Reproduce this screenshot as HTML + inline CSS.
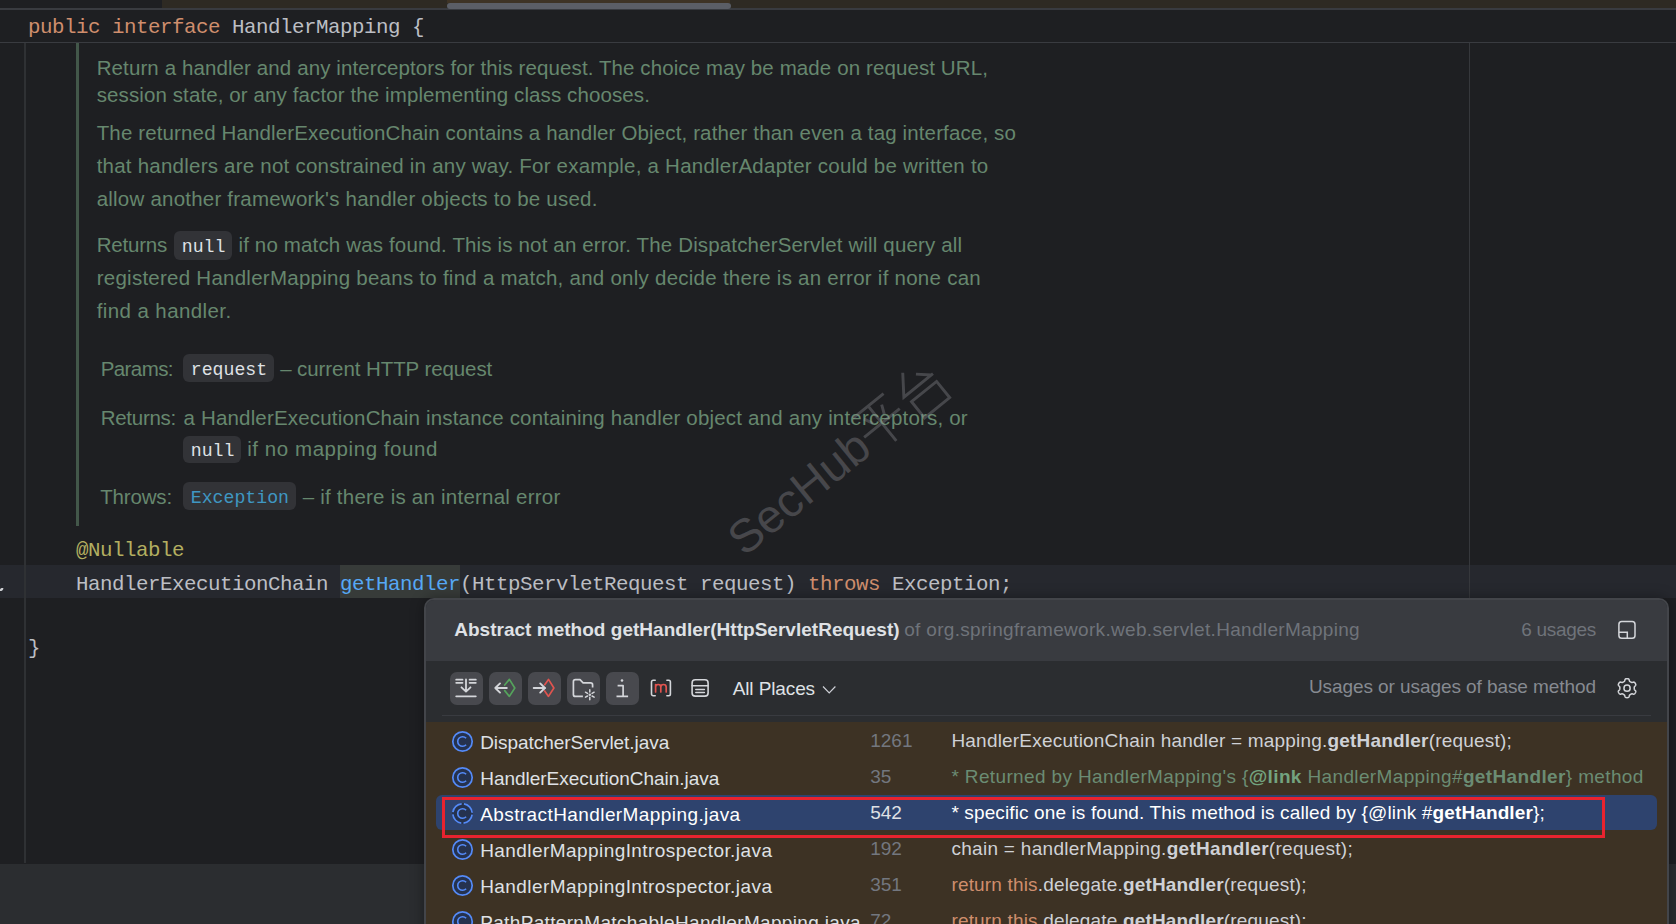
<!DOCTYPE html><html><head><meta charset="utf-8"><style>
html,body{margin:0;padding:0;}
body{width:1676px;height:924px;overflow:hidden;position:relative;background:#1e1f22;font-family:'Liberation Sans', sans-serif;}
.a{position:absolute;}
.t{position:absolute;white-space:pre;line-height:0;}
.t b{font-weight:bold;}
</style></head><body>

<!-- top strip -->
<div class="a" style="left:162px;top:0;width:1514px;height:8px;background:#2e2a23"></div>
<div class="a" style="left:447px;top:0;width:283px;height:3px;background:#3e3325"></div>
<div class="a" style="left:0;top:8px;width:1676px;height:2px;background:#393b40"></div>
<div class="a" style="left:447px;top:3px;width:283.5px;height:6px;background:#5b5e66;border-radius:3px"></div>
<div class="a" style="left:0;top:42px;width:1676px;height:1px;background:#393b40"></div>
<!-- current line -->
<div class="a" style="left:0;top:565px;width:1676px;height:33px;background:#26282e"></div>
<div class="a" style="left:340px;top:565px;width:120px;height:33px;background:#373b39"></div>
<!-- gutter lines -->
<div class="a" style="left:24px;top:43px;width:2px;height:820px;background:#2f3134"></div>
<div class="a" style="left:1468.5px;top:43px;width:1.6px;height:555px;background:#36383c"></div>
<!-- doc border -->
<div class="a" style="left:76px;top:43px;width:3px;height:483px;background:#43574a"></div>
<!-- bottom bar -->
<div class="a" style="left:0;top:864px;width:1676px;height:60px;background:#2b2d30"></div>

<div class="a" style="left:174px;top:231px;width:58px;height:28.5px;background:#323337;border-radius:6px;"></div>
<div class="a" style="left:182.5px;top:354px;width:91.25px;height:28px;background:#323337;border-radius:6px;"></div>
<div class="a" style="left:182.5px;top:435.5px;width:58.0px;height:27.5px;background:#323337;border-radius:6px;"></div>
<div class="a" style="left:182.5px;top:482px;width:113.75px;height:27.5px;background:#323337;border-radius:6px;"></div>

<div class="t" id="t0" style="left:28.00px;top:28.16px;font:normal 20.8px 'Liberation Mono', monospace;line-height:0;color:#bcbec4;letter-spacing:-0.48px;"><span style="color:#cf8e6d">public interface</span> HandlerMapping {</div>
<div class="t" id="t1" style="left:76.00px;top:551.16px;font:normal 20.8px 'Liberation Mono', monospace;line-height:0;color:#b3ae60;letter-spacing:-0.48px;">@Nullable</div>
<div class="t" id="t2" style="left:76.00px;top:585.16px;font:normal 20.8px 'Liberation Mono', monospace;line-height:0;color:#bcbec4;letter-spacing:-0.48px;">HandlerExecutionChain <span style="color:#56a8f5">getHandler</span>(HttpServletRequest request) <span style="color:#cf8e6d">throws</span> Exception;</div>
<div class="t" id="t3" style="left:28.00px;top:649.16px;font:normal 20.8px 'Liberation Mono', monospace;line-height:0;color:#bcbec4;letter-spacing:-0.48px;">}</div>
<div class="t" id="t4" style="left:96.70px;top:67.90px;font:normal 20.5px 'Liberation Sans', sans-serif;line-height:0;color:#66876e;letter-spacing:0.103px;">Return a handler and any interceptors for this request. The choice may be made on request URL,</div>
<div class="t" id="t5" style="left:96.70px;top:94.90px;font:normal 20.5px 'Liberation Sans', sans-serif;line-height:0;color:#66876e;letter-spacing:0.106px;">session state, or any factor the implementing class chooses.</div>
<div class="t" id="t6" style="left:96.70px;top:132.90px;font:normal 20.5px 'Liberation Sans', sans-serif;line-height:0;color:#66876e;letter-spacing:0.136px;">The returned HandlerExecutionChain contains a handler Object, rather than even a tag interface, so</div>
<div class="t" id="t7" style="left:96.70px;top:165.90px;font:normal 20.5px 'Liberation Sans', sans-serif;line-height:0;color:#66876e;letter-spacing:0.227px;">that handlers are not constrained in any way. For example, a HandlerAdapter could be written to</div>
<div class="t" id="t8" style="left:96.70px;top:198.90px;font:normal 20.5px 'Liberation Sans', sans-serif;line-height:0;color:#66876e;letter-spacing:0.218px;">allow another framework&#x27;s handler objects to be used.</div>
<div class="t" id="t9" style="left:96.70px;top:244.90px;font:normal 20.5px 'Liberation Sans', sans-serif;line-height:0;color:#66876e;letter-spacing:-0.212px;">Returns</div>
<div class="t" id="t10" style="left:238.45px;top:244.90px;font:normal 20.5px 'Liberation Sans', sans-serif;line-height:0;color:#66876e;letter-spacing:0.153px;">if no match was found. This is not an error. The DispatcherServlet will query all</div>
<div class="t" id="t11" style="left:96.70px;top:277.90px;font:normal 20.5px 'Liberation Sans', sans-serif;line-height:0;color:#66876e;letter-spacing:0.254px;">registered HandlerMapping beans to find a match, and only decide there is an error if none can</div>
<div class="t" id="t12" style="left:96.70px;top:310.90px;font:normal 20.5px 'Liberation Sans', sans-serif;line-height:0;color:#66876e;letter-spacing:0.400px;">find a handler.</div>
<div class="t" id="t13" style="left:100.70px;top:368.90px;font:normal 20.5px 'Liberation Sans', sans-serif;line-height:0;color:#66876e;letter-spacing:-0.575px;">Params:</div>
<div class="t" id="t14" style="left:280.20px;top:368.90px;font:normal 20.5px 'Liberation Sans', sans-serif;line-height:0;color:#66876e;letter-spacing:-0.081px;">– current HTTP request</div>
<div class="t" id="t15" style="left:100.70px;top:417.90px;font:normal 20.5px 'Liberation Sans', sans-serif;line-height:0;color:#66876e;letter-spacing:-0.273px;">Returns:</div>
<div class="t" id="t16" style="left:183.45px;top:417.90px;font:normal 20.5px 'Liberation Sans', sans-serif;line-height:0;color:#66876e;letter-spacing:0.182px;">a HandlerExecutionChain instance containing handler object and any interceptors, or</div>
<div class="t" id="t17" style="left:247.20px;top:448.90px;font:normal 20.5px 'Liberation Sans', sans-serif;line-height:0;color:#66876e;letter-spacing:0.564px;">if no mapping found</div>
<div class="t" id="t18" style="left:100.20px;top:497.40px;font:normal 20.5px 'Liberation Sans', sans-serif;line-height:0;color:#66876e;letter-spacing:-0.158px;">Throws:</div>
<div class="t" id="t19" style="left:302.70px;top:497.40px;font:normal 20.5px 'Liberation Sans', sans-serif;line-height:0;color:#66876e;letter-spacing:0.229px;">– if there is an internal error</div>
<div class="t" id="t20" style="left:181.75px;top:247.15px;font:normal 18.2px 'Liberation Mono', monospace;line-height:0;color:#dfe1e5;">null</div>
<div class="t" id="t21" style="left:190.75px;top:370.15px;font:normal 18.2px 'Liberation Mono', monospace;line-height:0;color:#dfe1e5;">request</div>
<div class="t" id="t22" style="left:190.75px;top:450.85px;font:normal 18.2px 'Liberation Mono', monospace;line-height:0;color:#dfe1e5;">null</div>
<div class="t" id="t23" style="left:190.75px;top:498.15px;font:normal 18.2px 'Liberation Mono', monospace;line-height:0;color:#3f97c2;">Exception</div>
<div class="a" style="left:424px;top:598px;width:1241px;height:400px;border:2px solid #43454a;border-radius:10px;overflow:hidden;background:#2b2d30;box-shadow:0 0 14px rgba(0,0,0,0.35)">
  <div class="a" style="left:0;top:0;width:100%;height:61px;background:#393b40"></div>
  <div class="a" style="left:0;top:122px;width:100%;height:300px;background:#3d3224"></div>
  <div class="a" style="left:16px;top:115px;width:1209px;height:1px;background:#393b40"></div>
</div>
<!-- selected row -->
<div class="a" style="left:436px;top:795px;width:1221px;height:35px;background:#2e436e;border-radius:6px"></div>
<!-- toolbar buttons -->
<div class="a" style="left:449.5px;top:672px;width:33px;height:33px;background:#48494e;border-radius:7px"></div>
<div class="a" style="left:488.5px;top:672px;width:33px;height:33px;background:#48494e;border-radius:7px"></div>
<div class="a" style="left:527.5px;top:672px;width:33px;height:33px;background:#48494e;border-radius:7px"></div>
<div class="a" style="left:566.5px;top:672px;width:33px;height:33px;background:#48494e;border-radius:7px"></div>
<div class="a" style="left:605.5px;top:672px;width:33px;height:33px;background:#48494e;border-radius:7px"></div>
<!-- toolbar icons (16-unit grid, 1.5x) -->
<svg class="a" style="left:446px;top:668px" width="40" height="40" viewBox="0 0 40 40" fill="none" stroke="#d4d6da" stroke-width="1.8" stroke-linecap="round" stroke-linejoin="round">
  <path d="M10.2 11.7h6.3M23.6 11.7h6.2M10.2 14.8h6.3M23.6 14.8h6.2M20 11.4v12.2M15.5 19.3l4.5 4.4 4.5-4.4M10.2 28.3h19.6"/>
</svg>
<svg class="a" style="left:486px;top:670px" width="80" height="38" viewBox="0 0 80 38" fill="none" stroke-linecap="round" stroke-linejoin="round">
  <path d="M9.3 18h11.5M14 13.4 9.3 18l4.7 4.6" stroke="#d4d6da" stroke-width="1.9"/>
  <path d="M18.7 15 23.4 9.4l5.4 8.6-5.4 8.4-4.7-5.8" stroke="#55a35c" stroke-width="1.7"/>
  <path d="M47.7 18h11.5M54.2 13.4 58.9 18l-4.7 4.6" stroke="#d4d6da" stroke-width="1.9"/>
  <path d="M58.7 14.7 62.5 9.4l5.4 8.6-5.4 8.4-3.8-5.5" stroke="#e0544f" stroke-width="1.7"/>
</svg>
<svg class="a" style="left:564px;top:668px" width="80" height="40" viewBox="0 0 80 40" fill="none" stroke="#d4d6da" stroke-width="1.7" stroke-linecap="butt" stroke-linejoin="round">
  <path d="M18.9 28.4H11.4a2 2 0 0 1-2-2V13.7a2 2 0 0 1 2-2h4.6l3.1 3.2h7.5a2 2 0 0 1 2 2v2.7"/>
  <circle cx="25.8" cy="26.7" r="6" fill="#45464b" stroke="none"/>
  <path d="M25.80 24.10L25.80 21.70M23.55 25.40L21.47 24.20M23.55 28.00L21.47 29.20M25.80 29.30L25.80 31.70M28.05 28.00L30.13 29.20M28.05 25.40L30.13 24.20" stroke-width="1.5" stroke-linecap="round"/>
  <circle cx="25.8" cy="26.7" r="1.3" fill="#d4d6da" stroke="none"/>
  <circle cx="58" cy="12.5" r="1.3" fill="#d4d6da" stroke="none"/>
  <path d="M53.6 17.6h5.5v10.7M52.5 28.3h11.6"/>
</svg>
<svg class="a" style="left:644px;top:668px" width="80" height="40" viewBox="0 0 80 40" fill="none" stroke-linecap="round" stroke-linejoin="round">
  <path d="M11.2 12.3H9.2a1.7 1.7 0 0 0-1.7 1.7v12.1a1.7 1.7 0 0 0 1.7 1.7h2M22.9 12.3h1.8a1.7 1.7 0 0 1 1.7 1.7v12.1a1.7 1.7 0 0 1-1.7 1.7h-1.8" stroke="#d4d6da" stroke-width="1.6"/>
  <path d="M11.6 23.9V16.6M11.6 19.1c0-1.8 1-2.6 2.6-2.6s2.6.8 2.6 2.6v4.8M16.8 19.1c0-1.8 1-2.6 2.7-2.6s2.7.8 2.7 2.6v4.8" stroke="#e0544f" stroke-width="1.7"/>
  <rect x="48.1" y="11.8" width="16" height="16.3" rx="3.2" stroke="#d4d6da" stroke-width="1.6"/>
  <path d="M48.1 17.7H64.1M51.8 21.5H60.4M51.8 24.6H60.4" stroke="#d4d6da" stroke-width="1.5"/>
</svg>
<svg class="a" style="left:820px;top:682px" width="18" height="16" viewBox="0 0 18 16" fill="none">
  <path d="M3 4.5l6.2 6.3 6.2-6.3" stroke="#ced0d6" stroke-width="1.2"/>
</svg>
<!-- header right icon -->
<svg class="a" style="left:1600px;top:610px" width="50" height="40" viewBox="0 0 50 40" fill="none" stroke="#d4d6da" stroke-width="1.5">
  <rect x="18.9" y="11.6" width="16.1" height="16.6" rx="2.8"/>
  <path d="M18.9 22.3H27.3V28.2"/>
</svg>
<!-- gear -->
<svg class="a" style="left:1600px;top:660px" width="54" height="54" viewBox="0 0 54 54" fill="none" stroke="#d4d6da" stroke-width="1.5" stroke-linejoin="round">
  <path d="M27.05 18.65L27.38 18.66L27.71 18.69L28.04 18.74L28.36 18.83L28.66 19.00L28.93 19.30L29.13 19.79L29.28 20.38L29.41 20.87L29.58 21.19L29.78 21.39L29.99 21.54L30.21 21.67L30.43 21.79L30.65 21.91L30.87 22.04L31.08 22.17L31.30 22.30L31.54 22.41L31.81 22.48L32.17 22.46L32.67 22.34L33.25 22.16L33.77 22.10L34.17 22.18L34.47 22.36L34.71 22.59L34.92 22.84L35.10 23.12L35.28 23.40L35.44 23.69L35.58 23.99L35.70 24.30L35.78 24.62L35.78 24.97L35.65 25.35L35.33 25.78L34.89 26.19L34.54 26.56L34.34 26.86L34.27 27.14L34.25 27.39L34.25 27.65L34.25 27.90L34.25 28.15L34.25 28.40L34.25 28.65L34.25 28.91L34.27 29.16L34.34 29.44L34.54 29.74L34.89 30.11L35.33 30.52L35.65 30.95L35.78 31.33L35.78 31.68L35.70 32.00L35.58 32.31L35.44 32.61L35.28 32.90L35.10 33.18L34.92 33.46L34.71 33.71L34.47 33.94L34.17 34.12L33.77 34.20L33.25 34.14L32.67 33.96L32.17 33.84L31.81 33.82L31.54 33.89L31.30 34.00L31.08 34.13L30.87 34.26L30.65 34.39L30.43 34.51L30.21 34.63L29.99 34.76L29.78 34.91L29.58 35.11L29.41 35.43L29.28 35.92L29.13 36.51L28.93 37.00L28.66 37.30L28.36 37.47L28.04 37.56L27.71 37.61L27.38 37.64L27.05 37.65L26.72 37.64L26.39 37.61L26.06 37.56L25.74 37.47L25.44 37.30L25.17 37.00L24.97 36.51L24.82 35.92L24.69 35.43L24.52 35.11L24.32 34.91L24.11 34.76L23.89 34.63L23.67 34.51L23.45 34.39L23.23 34.26L23.02 34.13L22.80 34.00L22.56 33.89L22.29 33.82L21.93 33.84L21.43 33.96L20.85 34.14L20.33 34.20L19.93 34.12L19.63 33.94L19.39 33.71L19.18 33.46L19.00 33.18L18.82 32.90L18.66 32.61L18.52 32.31L18.40 32.00L18.32 31.68L18.32 31.33L18.45 30.95L18.77 30.52L19.21 30.11L19.56 29.74L19.76 29.44L19.83 29.16L19.85 28.91L19.85 28.65L19.85 28.40L19.85 28.15L19.85 27.90L19.85 27.65L19.85 27.39L19.83 27.14L19.76 26.86L19.56 26.56L19.21 26.19L18.77 25.78L18.45 25.35L18.32 24.97L18.32 24.62L18.40 24.30L18.52 23.99L18.66 23.69L18.82 23.40L19.00 23.12L19.18 22.84L19.39 22.59L19.63 22.36L19.93 22.18L20.33 22.10L20.85 22.16L21.43 22.34L21.93 22.46L22.29 22.48L22.56 22.41L22.80 22.30L23.02 22.17L23.23 22.04L23.45 21.91L23.67 21.79L23.89 21.67L24.11 21.54L24.32 21.39L24.52 21.19L24.69 20.87L24.82 20.38L24.97 19.79L25.17 19.30L25.44 19.00L25.74 18.83L26.06 18.74L26.39 18.69L26.72 18.66Z"/>
  <circle cx="27.05" cy="28.15" r="3.1"/>
</svg>
<svg class="a" style="left:451.2px;top:730.25px" width="23" height="23" viewBox="0 0 23 23"><circle cx="11.5" cy="11.5" r="9.7" fill="#25324e" stroke="#548af7" stroke-width="1.7"/><path d="M15.1 8.3A4.8 4.8 0 1 0 15.1 14.7" fill="none" stroke="#548af7" stroke-width="1.6"/></svg>
<svg class="a" style="left:451.2px;top:766.25px" width="23" height="23" viewBox="0 0 23 23"><circle cx="11.5" cy="11.5" r="9.7" fill="#25324e" stroke="#548af7" stroke-width="1.7"/><path d="M15.1 8.3A4.8 4.8 0 1 0 15.1 14.7" fill="none" stroke="#548af7" stroke-width="1.6"/></svg>
<svg class="a" style="left:451.2px;top:802.25px" width="23" height="23" viewBox="0 0 23 23"><circle cx="11.5" cy="11.5" r="10.5" fill="#25324e"/><circle cx="11.5" cy="11.5" r="9.7" fill="none" stroke="#548af7" stroke-width="1.7" stroke-dasharray="12.9 2.34" stroke-dashoffset="14.07"/><path d="M15.1 8.3A4.8 4.8 0 1 0 15.1 14.7" fill="none" stroke="#548af7" stroke-width="1.6"/></svg>
<svg class="a" style="left:451.2px;top:838.25px" width="23" height="23" viewBox="0 0 23 23"><circle cx="11.5" cy="11.5" r="9.7" fill="#25324e" stroke="#548af7" stroke-width="1.7"/><path d="M15.1 8.3A4.8 4.8 0 1 0 15.1 14.7" fill="none" stroke="#548af7" stroke-width="1.6"/></svg>
<svg class="a" style="left:451.2px;top:874.25px" width="23" height="23" viewBox="0 0 23 23"><circle cx="11.5" cy="11.5" r="9.7" fill="#25324e" stroke="#548af7" stroke-width="1.7"/><path d="M15.1 8.3A4.8 4.8 0 1 0 15.1 14.7" fill="none" stroke="#548af7" stroke-width="1.6"/></svg>
<svg class="a" style="left:451.2px;top:910.25px" width="23" height="23" viewBox="0 0 23 23"><circle cx="11.5" cy="11.5" r="9.7" fill="#25324e" stroke="#548af7" stroke-width="1.7"/><path d="M15.1 8.3A4.8 4.8 0 1 0 15.1 14.7" fill="none" stroke="#548af7" stroke-width="1.6"/></svg>

<div class="t" id="t24" style="left:454.20px;top:630.22px;font:bold 19px 'Liberation Sans', sans-serif;line-height:0;color:#dfe1e5;letter-spacing:0.021px;">Abstract method getHandler(HttpServletRequest)</div>
<div class="t" id="t25" style="left:904.20px;top:630.22px;font:normal 19px 'Liberation Sans', sans-serif;line-height:0;color:#6f737a;letter-spacing:0.315px;">of org.springframework.web.servlet.HandlerMapping</div>
<div class="t" id="t26" style="left:1521.20px;top:630.42px;font:normal 19px 'Liberation Sans', sans-serif;line-height:0;color:#6f737a;letter-spacing:-0.291px;">6 usages</div>
<div class="t" id="t27" style="left:732.70px;top:689.12px;font:normal 19px 'Liberation Sans', sans-serif;line-height:0;color:#dfe1e5;letter-spacing:-0.112px;">All Places</div>
<div class="t" id="t28" style="left:1308.90px;top:687.32px;font:normal 19px 'Liberation Sans', sans-serif;line-height:0;color:#868a91;letter-spacing:-0.074px;">Usages or usages of base method</div>
<div class="t" id="t29" style="left:480.20px;top:743.42px;font:normal 19px 'Liberation Sans', sans-serif;line-height:0;color:#dfe1e5;letter-spacing:-0.047px;">DispatcherServlet.java</div>
<div class="t" id="t30" style="left:870.20px;top:741.42px;font:normal 19px 'Liberation Sans', sans-serif;line-height:0;color:#73777f;">1261</div>
<div class="t" id="t31" style="left:951.45px;top:741.42px;font:normal 19px 'Liberation Sans', sans-serif;line-height:0;color:#cfd1d6;letter-spacing:0.198px;">HandlerExecutionChain handler = mapping.<b>getHandler</b>(request);</div>
<div class="t" id="t32" style="left:480.20px;top:779.42px;font:normal 19px 'Liberation Sans', sans-serif;line-height:0;color:#dfe1e5;letter-spacing:-0.026px;">HandlerExecutionChain.java</div>
<div class="t" id="t33" style="left:870.20px;top:777.42px;font:normal 19px 'Liberation Sans', sans-serif;line-height:0;color:#73777f;">35</div>
<div class="t" id="t34" style="left:951.45px;top:777.42px;font:normal 19px 'Liberation Sans', sans-serif;line-height:0;color:#cfd1d6;letter-spacing:0.364px;"><span style="color:#6b8c73">* Returned by HandlerMapping's {<b style="color:#73a37f">@link</b> HandlerMapping#<b>getHandler</b>} method</span></div>
<div class="t" id="t35" style="left:480.20px;top:815.42px;font:normal 19px 'Liberation Sans', sans-serif;line-height:0;color:#ffffff;letter-spacing:0.413px;">AbstractHandlerMapping.java</div>
<div class="t" id="t36" style="left:870.20px;top:813.42px;font:normal 19px 'Liberation Sans', sans-serif;line-height:0;color:#dfe1e5;">542</div>
<div class="t" id="t37" style="left:951.45px;top:813.42px;font:normal 19px 'Liberation Sans', sans-serif;line-height:0;color:#ffffff;letter-spacing:0.120px;">* specific one is found. This method is called by {@link #<b>getHandler</b>};</div>
<div class="t" id="t38" style="left:480.20px;top:851.42px;font:normal 19px 'Liberation Sans', sans-serif;line-height:0;color:#dfe1e5;letter-spacing:0.431px;">HandlerMappingIntrospector.java</div>
<div class="t" id="t39" style="left:870.20px;top:849.42px;font:normal 19px 'Liberation Sans', sans-serif;line-height:0;color:#73777f;">192</div>
<div class="t" id="t40" style="left:951.45px;top:849.42px;font:normal 19px 'Liberation Sans', sans-serif;line-height:0;color:#cfd1d6;letter-spacing:0.288px;">chain = handlerMapping.<b>getHandler</b>(request);</div>
<div class="t" id="t41" style="left:480.20px;top:887.42px;font:normal 19px 'Liberation Sans', sans-serif;line-height:0;color:#dfe1e5;letter-spacing:0.431px;">HandlerMappingIntrospector.java</div>
<div class="t" id="t42" style="left:870.20px;top:885.42px;font:normal 19px 'Liberation Sans', sans-serif;line-height:0;color:#73777f;">351</div>
<div class="t" id="t43" style="left:951.45px;top:885.42px;font:normal 19px 'Liberation Sans', sans-serif;line-height:0;color:#cfd1d6;letter-spacing:0.167px;"><span style="color:#cf8e6d">return this</span>.delegate.<b>getHandler</b>(request);</div>
<div class="t" id="t44" style="left:480.20px;top:923.42px;font:normal 19px 'Liberation Sans', sans-serif;line-height:0;color:#dfe1e5;letter-spacing:0.339px;">PathPatternMatchableHandlerMapping.java</div>
<div class="t" id="t45" style="left:870.20px;top:921.42px;font:normal 19px 'Liberation Sans', sans-serif;line-height:0;color:#73777f;">72</div>
<div class="t" id="t46" style="left:951.45px;top:921.42px;font:normal 19px 'Liberation Sans', sans-serif;line-height:0;color:#cfd1d6;letter-spacing:0.167px;"><span style="color:#cf8e6d">return this</span>.delegate.<b>getHandler</b>(request);</div>
<div class="a" style="left:442px;top:797px;width:1157px;height:34.5px;border:3px solid #e8232f"></div>
<!-- watermark -->
<div class="a" style="left:745px;top:558px;width:0;height:0;transform:rotate(-39deg) scale(1.04);transform-origin:0 0">
  <div class="a" style="left:0;top:-15.6px;font:45px 'Liberation Sans', sans-serif;line-height:0;white-space:pre;color:rgba(150,150,155,0.34)">SecHub</div>
  <svg class="a" style="left:161px;top:-45px;overflow:visible" width="100" height="50" viewBox="0 0 100 50" fill="none" stroke="rgba(150,150,155,0.34)" stroke-width="2.8">
    <path d="M4 6h38M12 13l4 9M34 13l-4 9M1 27h44M23 6v43"/>
    <path d="M69 2 55 21h36M78 11l11 10M58 29h31v20H58z"/>
  </svg>
</div>
<!-- gutter mark -->
<div class="a" style="left:0;top:588px;width:2.5px;height:3px;background:#d0d2d6;border-radius:1px;transform:skewX(-30deg)"></div>

</body></html>
